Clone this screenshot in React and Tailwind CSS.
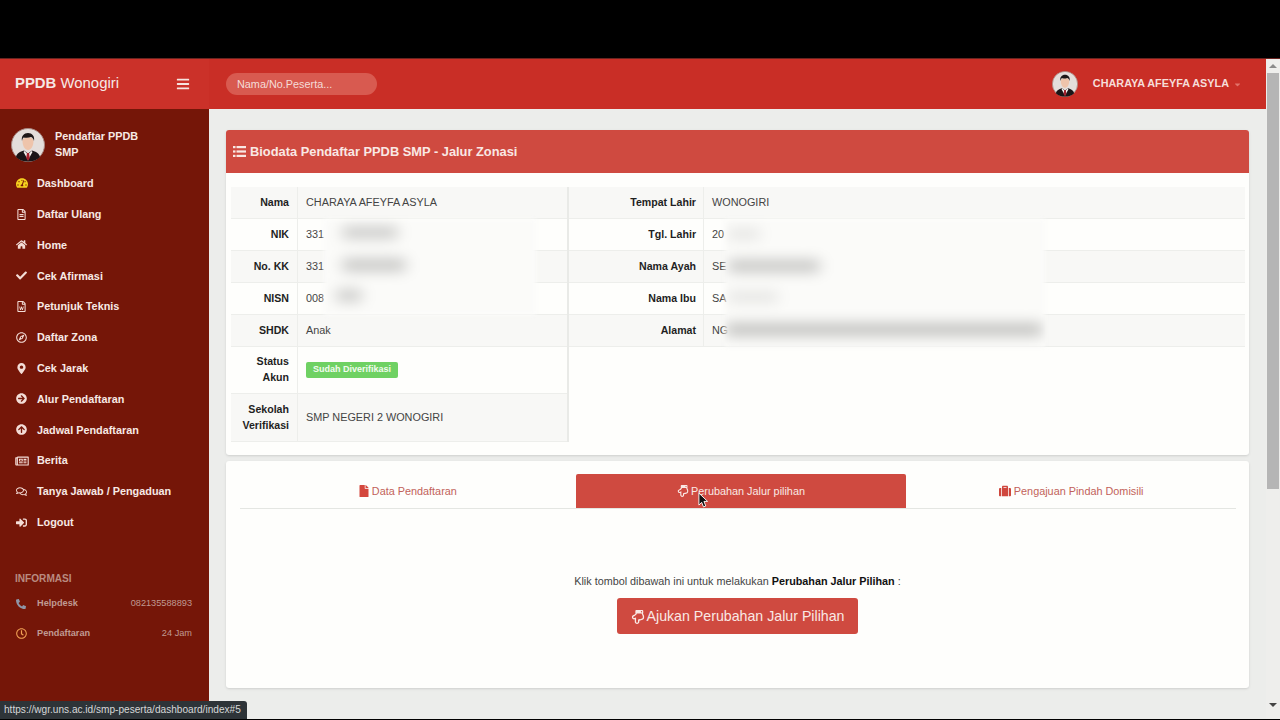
import React from "react";
import {
  FaTachometerAlt, FaRegFileAlt, FaHome, FaCheck, FaRegFileWord, FaRegCompass, FaMapMarkerAlt,
  FaArrowCircleRight, FaArrowCircleUp, FaRegNewspaper, FaRegComments, FaSignInAlt, FaPhone, FaRegClock,
  FaBars, FaFile, FaRegHandPointDown, FaSuitcase, FaCaretDown,
} from "react-icons/fa";

function Avatar({ className }) {
  return (
    <svg viewBox="0 0 34 34" className={className}>
      <circle cx="17" cy="17" r="16.5" fill="#e4dedb" stroke="#a88680" strokeWidth="1" />
      <path d="M5 29c1-4 4-5.500 8-6.500l4 3 4-3c4 1 7 2.500 8 6.500-3 3-7 4.500-12 4.500S8 32 5 29z" fill="#1a1517" />
      <path d="M13.500 23l3.500 3.500 3.500-3.500 1 1-4.500 8-4.500-8z" fill="#f4f1ee" />
      <path d="M16 25h2l.8 5-1.800 3-1.800-3z" fill="#a3202c" />
      <path d="M11.500 13c0 5 2.500 9 5.500 9s5.500-4 5.500-9-11-5-11 0z" fill="#eec4ab" />
      <path d="M11 13c-1-5 2-8 6-8s7 3 6 8c-.500-2-1.500-3.500-3-4-2 .800-5 .800-7.500.500-.800.800-1.200 2-1.500 3.500z" fill="#1d1718" />
    </svg>
  );
}

function ListIcon() {
  return (
    <svg viewBox="0 0 13 11" className="h-[11px] w-[13px]" fill="currentColor">
      <rect x="0" y="0" width="2.500" height="2.200" />
      <rect x="3.500" y="0" width="9.500" height="2.200" />
      <rect x="0" y="4.400" width="2.500" height="2.200" />
      <rect x="3.500" y="4.400" width="9.500" height="2.200" />
      <rect x="0" y="8.800" width="2.500" height="2.200" />
      <rect x="3.500" y="8.800" width="9.500" height="2.200" />
    </svg>
  );
}

const menu = [
  [FaTachometerAlt, "Dashboard", "text-[#f6d21f]", "h-[12px] w-[12px]"],
  [FaRegFileAlt, "Daftar Ulang"],
  [FaHome, "Home"],
  [FaCheck, "Cek Afirmasi"],
  [FaRegFileWord, "Petunjuk Teknis"],
  [FaRegCompass, "Daftar Zona"],
  [FaMapMarkerAlt, "Cek Jarak"],
  [FaArrowCircleRight, "Alur Pendaftaran"],
  [FaArrowCircleUp, "Jadwal Pendaftaran"],
  [FaRegNewspaper, "Berita", "", "h-[12px] w-[14px] -ml-[1px]"],
  [FaRegComments, "Tanya Jawab / Pengaduan"],
  [FaSignInAlt, "Logout"],
];

function MenuItem({ icon: Icon, label, color, size }) {
  return (
    <div className="flex h-[30.8px] items-center pl-[16px]">
      <span className="flex w-[21px] shrink-0 items-center">
        <Icon className={`${size || "h-[11px] w-[11px]"} ${color || "text-[#f4ddd7]"}`} />
      </span>
      <span className="text-[10.85px] font-bold text-[#f7e9e4]">{label}</span>
    </div>
  );
}

function Row({ label, value, striped, h, w1, pr = "pr-2", labelClass = "" }) {
  return (
    <div className={`flex items-stretch border-b border-[#edeeeb] ${h} ${striped ? "bg-[#f8f8f6]" : "bg-[#fefefc]"}`}>
      <div className={`flex ${w1} ${pr} shrink-0 items-center justify-end border-r border-[#edeeeb] text-right text-[10.6px] leading-4 font-bold text-[#1f1f1f]`}>
        <span className={labelClass}>{label}</span>
      </div>
      <div className="flex min-w-0 flex-1 items-center pl-2 text-[10.85px] text-[#444]">{value}</div>
    </div>
  );
}

const Blur = ({ className }) => <div className={`absolute rounded-full bg-[#a9a9a7] blur-[7px] ${className}`} />;

export default function App() {
  return (
    <div className="relative flex h-[720px] w-[1280px] flex-col overflow-hidden bg-black font-['Liberation_Sans',Arial,sans-serif]">
      <div className="h-[58px] shrink-0 bg-black" />
      <div className="h-[1px] shrink-0 bg-[#6a2420]" />
      <div className="flex min-h-0 flex-1">
        <div className="flex min-w-0 flex-1 flex-col">
          <header className="flex h-[50px] shrink-0 items-center bg-[#c92e26]">
            <div className="flex h-full w-[209px] shrink-0 items-center justify-between bg-[#cb3129] pr-[19px] pl-[15px]">
              <span className="mb-[2px] text-[14.9px] text-[#f6e9e6]"><b>PPDB</b> Wonogiri</span>
              <FaBars className="mb-[1px] h-[14px] w-[14px] text-[#f6e4e0]" />
            </div>
            <div className="ml-[17px] flex h-[22px] w-[151px] items-center rounded-full bg-[#d85a50] pl-[11px] text-[10.85px] text-[#f5dcd8]">
              Nama/No.Peserta...
            </div>
            <div className="ml-auto flex items-center pr-[24px]">
              <Avatar className="h-[26px] w-[26px]" />
              <span className="mb-[1px] ml-[15px] text-[10.85px] font-bold text-[#f6ddd9]">CHARAYA AFEYFA ASYLA</span>
              <FaCaretDown className="ml-[4px] h-[9px] w-[9px] text-[#e2736a]" />
            </div>
          </header>
          <div className="flex min-h-0 flex-1">
            <aside className="w-[209px] shrink-0 bg-[#751608]">
              <div className="flex h-[59px] items-start pt-[19px] pl-[11px]">
                <Avatar className="h-[34px] w-[34px] shrink-0" />
                <div className="ml-[10px] w-[95px] text-[10.85px] leading-4 font-bold text-[#f7e9e4]">Pendaftar PPDB SMP</div>
              </div>
              {menu.map(([icon, label, color, size]) => (
                <MenuItem key={label} icon={icon} label={label} color={color} size={size} />
              ))}
              <div className="mt-[33px] pl-[15px] text-[10.1px] font-bold text-[#b98a80]">INFORMASI</div>
              <div className="mt-[3px] flex h-[30px] items-center pr-[17px] pl-[16px] text-[9.2px] text-[#c09a92]">
                <span className="w-[21px]"><FaPhone className="h-[10px] w-[10px] -scale-x-100 text-[#8f96a8]" /></span>
                <b>Helpdesk</b>
                <span className="ml-auto">082135588893</span>
              </div>
              <div className="flex h-[30.500px] items-center pr-[17px] pl-[16px] text-[9.2px] text-[#c09a92]">
                <span className="w-[21px]"><FaRegClock className="h-[11px] w-[11px] text-[#f0a155]" /></span>
                <b>Pendaftaran</b>
                <span className="ml-auto">24 Jam</span>
              </div>
            </aside>
            <main className="min-w-0 flex-1 bg-[#ecedeb] pt-[21px] pr-[17px] pl-[17px]">
              <section className="h-[325px] overflow-hidden rounded-[3px] bg-[#fefefc] shadow-sm">
                <h2 className="flex h-[43px] items-center gap-[4px] bg-[#cf4a40] pl-[7px] text-[12.85px] font-bold text-[#f9e8e4]">
                  <ListIcon />
                  Biodata Pendaftar PPDB SMP - Jalur Zonasi
                </h2>
                <div className="flex items-start pt-[14px] pr-[4px] pl-[5px]">
                  <div className="relative w-[338px] shrink-0 border-r-2 border-[#e9eae7]">
                    <Row w1="w-[67px]" h="h-[31.500px]" striped label="Nama" value="CHARAYA AFEYFA ASYLA" />
                    <Row w1="w-[67px]" h="h-[32px]" label="NIK" value="331" />
                    <Row w1="w-[67px]" h="h-[32px]" striped label="No. KK" value="331" />
                    <Row w1="w-[67px]" h="h-[32px]" label="NISN" value="008" />
                    <Row w1="w-[67px]" h="h-[32px]" striped label="SHDK" value="Anak" />
                    <Row w1="w-[67px]" h="h-[47.500px]" labelClass="-mt-[2px]" label={<>Status<br />Akun</>} value={
                      <span className="rounded-[2px] bg-[#6fd163] px-[7px] py-[1.5px] text-[9px] font-bold text-[#f2fbef]">Sudah Diverifikasi</span>
                    } />
                    <Row w1="w-[67px]" h="h-[47.500px]" striped label={<>Sekolah<br />Verifikasi</>} value="SMP NEGERI 2 WONOGIRI" />
                    <div className="absolute top-[32px] left-[93px] h-[96px] w-[212px] overflow-hidden bg-[#fbfbf9] blur-[2px]">
                      <Blur className="top-[10px] left-[18px] h-[7px] w-[56px]" />
                      <Blur className="top-[42px] left-[18px] h-[8px] w-[64px]" />
                      <Blur className="top-[73px] left-[12px] h-[7px] w-[26px]" />
                    </div>
                  </div>
                  <div className="relative min-w-0 flex-1">
                    <Row w1="w-[135px]" pr="pr-[7px]" h="h-[31.500px]" striped label="Tempat Lahir" value="WONOGIRI" />
                    <Row w1="w-[135px]" pr="pr-[7px]" h="h-[32px]" label="Tgl. Lahir" value="20" />
                    <Row w1="w-[135px]" pr="pr-[7px]" h="h-[32px]" striped label="Nama Ayah" value="SE" />
                    <Row w1="w-[135px]" pr="pr-[7px]" h="h-[32px]" label="Nama Ibu" value="SA" />
                    <Row w1="w-[135px]" pr="pr-[7px]" h="h-[32px]" striped label="Alamat" value="NG" />
                    <div className="absolute top-[32px] left-[156px] h-[128px] w-[320px] overflow-hidden bg-[#fbfbf9] blur-[2px]">
                      <Blur className="top-[12px] left-[3px] h-[6px] w-[32px] opacity-50" />
                      <Blur className="top-[43px] left-[3px] h-[8px] w-[92px]" />
                      <Blur className="top-[75px] left-[3px] h-[6px] w-[50px] opacity-50" />
                      <Blur className="top-[106px] left-[0px] h-[9px] w-[318px]" />
                    </div>
                  </div>
                </div>
              </section>
              <section className="mt-[6px] h-[227px] rounded-[3px] bg-[#fefefc] px-[14px] pt-[13px] shadow-sm">
                <div className="-mr-[1px] flex h-[35px] border-b border-[#e4e6e2] text-[10.85px] text-[#c2625a]">
                  <div className="flex w-[336px] items-center justify-center gap-[3px]">
                    <FaFile className="h-[12px] w-[10px] text-[#d4473d]" />Data Pendaftaran
                  </div>
                  <div className="flex h-[34px] w-[331px] items-center justify-center gap-[2px] rounded-t-[2px] bg-[#cf4a40] text-[#f9e8e4]">
                    <FaRegHandPointDown className="h-[12px] w-[12px]" />Perubahan Jalur pilihan
                  </div>
                  <div className="flex w-[330px] items-center justify-center gap-[3px]">
                    <FaSuitcase className="h-[12px] w-[12px] text-[#cf473d]" />Pengajuan Pindah Domisili
                  </div>
                </div>
                <p className="mt-[64px] text-center text-[10.8px] leading-4 text-[#444]">
                  Klik tombol dibawah ini untuk melakukan <b className="text-[#111]">Perubahan Jalur Pilihan</b> :
                </p>
                <div className="mt-[9px] flex justify-center">
                  <div className="flex h-[36px] w-[241px] items-center justify-center gap-[2px] rounded-[3px] bg-[#cf4a40] pt-[1px] text-[14.2px] text-[#f9e8e4]">
                    <FaRegHandPointDown className="h-[14px] w-[14px]" />Ajukan Perubahan Jalur Pilihan
                  </div>
                </div>
              </section>
            </main>
          </div>
        </div>
        <div className="flex w-[14px] shrink-0 flex-col bg-[#eeeeec]">
          <div className="flex h-[14px] items-center justify-center">
            <div className="h-0 w-0 border-x-[4px] border-b-[4px] border-x-transparent border-b-[#8b8b8b]" />
          </div>
          <div className="mx-[1px] h-[416px] bg-[#b5b5b5]" />
          <div className="mt-auto flex h-[16px] items-start justify-center">
            <div className="h-0 w-0 border-x-[4px] border-t-[4px] border-x-transparent border-t-[#444]" />
          </div>
        </div>
      </div>
      <div className="h-[1px] shrink-0 bg-black" />
      <div className="absolute bottom-[1px] left-0 flex h-[18px] w-[247px] items-center rounded-tr-[3px] bg-[#2e3438] pl-[4px] text-[10.1px] whitespace-nowrap text-[#d6d8d9]">
        https://wgr.uns.ac.id/smp-peserta/dashboard/index#5
      </div>
      <svg viewBox="0 0 12 18" className="absolute top-[492px] left-[698px] h-[17px] w-[11px]">
        <path d="M1 1v13l3-3 2 5 2.500-1-2-5h4z" fill="#111" stroke="#fff" strokeWidth="1" />
      </svg>
    </div>
  );
}
